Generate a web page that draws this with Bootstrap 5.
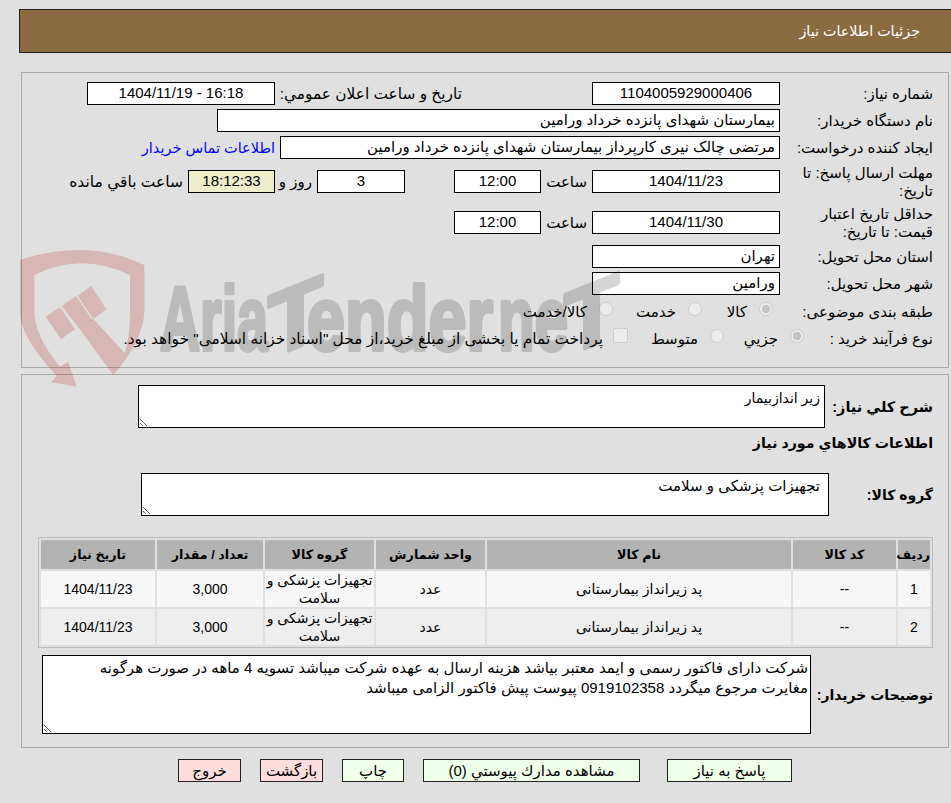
<!DOCTYPE html>
<html lang="fa" dir="rtl">
<head>
<meta charset="utf-8">
<title>جزئیات اطلاعات نیاز</title>
<link href="https://cdn.jsdelivr.net/npm/bootstrap@5.3.0/dist/css/bootstrap.min.css" rel="stylesheet">
<style>
html,body{background:#e0e0e0;}
body{position:relative;font-family:"Liberation Sans","DejaVu Sans",sans-serif;font-size:15px;line-height:18px;color:#000;margin:0;height:803px;overflow:hidden;text-align:right;}
.topbar{margin:9px -1px 19px 0;margin-left:19px;height:44px;background:#8b6c42;border:1px solid #222;color:#fff;padding:0 31px;display:flex;align-items:center;font-size:14.3px;}
.pane{margin:0 2px 0 0;margin-left:21px;border:1px solid #aaa;padding:9px 15px 0 16px;}
.pane-a{height:296px;margin-bottom:6px;}
.pane-b{height:374px;padding-top:10px;}
.frow{display:flex;align-items:center;height:23px;margin-bottom:4px;}
.frow-tall{height:37px;}
.frow-opt1{margin-top:5px;}
.frow-opt2{margin-top:2px;}
.flabel{flex:none;width:153px;}
.flabel-s{width:122px;}
.box.form-control{flex:none;height:23px;border:1px solid #000;border-radius:0;background:#fff;color:#000;font-size:15px;line-height:20px;padding:0 4px;text-align:right;white-space:nowrap;overflow:hidden;}
.box.num{text-align:center;}
.box.clock{background:#eeeecc;}
.w188{width:188px;}.w563{width:563px;}.w500{width:500px;}.w87{width:87px;}.w88{width:88px;}
.hint{flex:none;white-space:nowrap;font-size:15.4px;}
.slot{flex:none;white-space:nowrap;padding-right:5px;}
.slot-wide{font-size:15.5px;}
.s51{width:51px}.s42{width:42px}.s187{width:187px}
.gap130{margin-right:130px}.gap49{margin-right:49px}
.contact{color:#0000ff;text-decoration:none;font-size:14.5px;}
.opt{flex:none;display:flex;align-items:center;white-space:nowrap;padding-right:7px;}
.opt-long{font-size:15.4px;}
.o71{width:71px}.o89{width:89px}.o80{width:80px}.o96{width:96px}
.opt .form-check-input{flex:none;width:14px;height:14px;margin:-5px 0 0 12px;background-color:#ececec;border:1px solid #ccc;opacity:1;}
.opt .form-check-input:checked{background-color:#ececec;border-color:#ccc;background-image:radial-gradient(circle,#c4c4c4 0,#c4c4c4 4px,transparent 4.5px);}
.opt .form-check-input[type=checkbox]{width:15px;height:15px;margin:-6px 0 0 10px;border-radius:2px;}
.area.form-control{flex:none;display:block;border:1px solid #000;border-radius:0;background:#fff;color:#000;font-size:14px;line-height:20px;padding:2px 4px;min-height:0;resize:both;box-shadow:none;}
.area.area-15{font-size:15px;padding:2px 2px;}
.area.area-group{font-size:15px;padding:2px 8px;}
.ta1{width:687px;height:43px}.ta2{width:688px;height:43px}.ta3{width:769px;height:79px}
.strong-lab{font-weight:700;font-size:14.5px;flex:none;white-space:nowrap;}
.strong-14{font-size:14px;}
.l108{width:108px}.l104{width:104px}.l122{width:122px}
.heading-line{font-weight:700;font-size:14.2px;height:45px;padding-bottom:15px;display:flex;align-items:center;}
.goods.table{width:895px;margin:21px 0 7px;border-collapse:separate;border-spacing:2px;border:1px solid #bbb;table-layout:fixed;color:#000;}
.goods.table>:not(caption)>*>*{padding:0;border:0;text-align:center;vertical-align:middle;font-size:14px;line-height:18px;box-shadow:none;color:#000;}
.goods.table>thead>tr>th{background:#b3b3b3;height:29px;font-size:12.7px;font-weight:700;}
.goods.table>tbody>tr>td{height:36px;background:#f7f7f7;}
.goods.table>tbody>tr+tr>td{background:#eeeeee;}
.c32{width:32px}.c103{width:103px}.c304{width:304px}.c109{width:109px}.c106{width:106px}.c114{width:114px}
.actions{display:flex;margin:11px 0 0 0;padding-right:159px;gap:19px;}
.actions .btn{flex:none;height:23px;padding:0;border:1px solid #222;border-radius:0;color:#000;font-size:15px;line-height:20px;}
.go{background:#efffea;}.stop{background:#ffdddd;}
.first-go{margin-left:8px;}
.w125{width:125px}.w217{width:217px}.w62{width:62px}.w63{width:63px}
.stamp{position:absolute;left:0;top:0;width:951px;height:803px;pointer-events:none;direction:ltr;}
.stamp-word{opacity:.16;}
.stamp text{font-family:"Liberation Sans",sans-serif;font-weight:700;fill:#000;stroke:#000;stroke-width:4;stroke-linejoin:round;font-size:90px;}
</style>
</head>
<body>
<div class="topbar">جزئیات اطلاعات نیاز</div>

<section class="pane pane-a">
  <div class="frow">
    <div class="flabel">شماره نیاز:</div>
    <div class="box form-control num w188">1104005929000406</div>
    <div class="hint s187 gap130">تاریخ و ساعت اعلان عمومي:</div>
    <div class="box form-control num w188" dir="ltr">1404/11/19 - 16:18</div>
  </div>
  <div class="frow">
    <div class="flabel">نام دستگاه خریدار:</div>
    <div class="box form-control w563">بیمارستان شهدای پانزده خرداد ورامین</div>
  </div>
  <div class="frow">
    <div class="flabel">ایجاد کننده درخواست:</div>
    <div class="box form-control w500">مرتضی چالک نیری کارپرداز بیمارستان شهدای پانزده خرداد ورامین</div>
    <a class="contact slot" href="#">اطلاعات تماس خریدار</a>
  </div>
  <div class="frow frow-tall">
    <div class="flabel">مهلت ارسال پاسخ: تا تاریخ:</div>
    <div class="box form-control num w188">1404/11/23</div>
    <div class="slot s51">ساعت</div>
    <div class="box form-control num w87">12:00</div>
    <div class="box form-control num w88 gap49">3</div>
    <div class="slot s42">روز و</div>
    <div class="box form-control num clock w87">18:12:33</div>
    <div class="slot slot-wide">ساعت باقي مانده</div>
  </div>
  <div class="frow frow-tall">
    <div class="flabel">حداقل تاریخ اعتبار قیمت: تا تاریخ:</div>
    <div class="box form-control num w188">1404/11/30</div>
    <div class="slot s51">ساعت</div>
    <div class="box form-control num w87">12:00</div>
  </div>
  <div class="frow">
    <div class="flabel">استان محل تحویل:</div>
    <div class="box form-control w188">تهران</div>
  </div>
  <div class="frow">
    <div class="flabel">شهر محل تحویل:</div>
    <div class="box form-control w188">ورامین</div>
  </div>
  <div class="frow frow-opt1">
    <div class="flabel">طبقه بندی موضوعی:</div>
    <label class="opt o71"><input class="form-check-input" type="radio" name="c1" checked disabled>کالا</label>
    <label class="opt o89"><input class="form-check-input" type="radio" name="c1" disabled>خدمت</label>
    <label class="opt"><input class="form-check-input" type="radio" name="c1" disabled>کالا/خدمت</label>
  </div>
  <div class="frow frow-opt2">
    <div class="flabel flabel-s">نوع فرآیند خرید :</div>
    <label class="opt o80"><input class="form-check-input" type="radio" name="c2" checked disabled>جزیي</label>
    <label class="opt o96"><input class="form-check-input" type="radio" name="c2" disabled>متوسط</label>
    <label class="opt opt-long"><input class="form-check-input" type="checkbox" disabled>پرداخت تمام یا بخشی از مبلغ خرید،از محل "اسناد خزانه اسلامی" خواهد بود.</label>
  </div>
</section>

<section class="pane pane-b">
  <div class="d-flex align-items-center">
    <div class="strong-lab l108">شرح کلي نیاز:</div>
    <textarea class="area form-control ta1" readonly>زیر اندازبیمار</textarea>
  </div>
  <div class="heading-line">اطلاعات کالاهاي مورد نیاز</div>
  <div class="d-flex align-items-center">
    <div class="strong-lab strong-14 l104">گروه کالا:</div>
    <textarea class="area area-group form-control ta2" readonly>تجهیزات پزشکی و سلامت</textarea>
  </div>
  <table class="table goods">
    <colgroup><col class="c32"><col class="c103"><col class="c304"><col class="c109"><col class="c109"><col class="c106"><col class="c114"></colgroup>
    <thead>
      <tr><th>ردیف</th><th>کد کالا</th><th>نام کالا</th><th>واحد شمارش</th><th>گروه کالا</th><th>تعداد / مقدار</th><th>تاریخ نیاز</th></tr>
    </thead>
    <tbody>
      <tr><td>1</td><td>--</td><td>پد زیرانداز بیمارستانی</td><td>عدد</td><td>تجهیزات پزشکی و<br>سلامت</td><td>3,000</td><td>1404/11/23</td></tr>
      <tr><td>2</td><td>--</td><td>پد زیرانداز بیمارستانی</td><td>عدد</td><td>تجهیزات پزشکی و<br>سلامت</td><td>3,000</td><td>1404/11/23</td></tr>
    </tbody>
  </table>
  <div class="d-flex align-items-center">
    <div class="strong-lab strong-14 l122">توضیحات خریدار:</div>
    <textarea class="area area-15 form-control ta3" readonly>شرکت دارای فاکتور رسمی و ایمد معتبر بیاشد هزینه ارسال به عهده شرکت میباشد تسویه 4 ماهه در صورت هرگونه
مغایرت مرجوع میگردد 0919102358 پیوست پیش فاکتور الزامی میباشد</textarea>
  </div>
</section>

<div class="actions">
  <button type="button" class="btn go w125 first-go">پاسخ به نیاز</button>
  <button type="button" class="btn go w217">مشاهده مدارك پیوستي (0)</button>
  <button type="button" class="btn go w62">چاپ</button>
  <button type="button" class="btn stop w63">بازگشت</button>
  <button type="button" class="btn stop w63">خروج</button>
</div>

<svg class="stamp" viewBox="0 0 951 803" aria-hidden="true">
  <g transform="translate(15 240) scale(.3333)">
    <path fill="rgba(175,0,0,.19)" d="M15,60 Q110,28 200,30 Q290,30 388,75 L388,215 Q385,300 295,405 L190,262 L235,237 L330,340 Q345,285 345,215 L345,105 Q270,70 200,70 Q130,70 58,105 L58,215 Q60,290 135,380 L160,365 L185,440 L108,426 L125,408 Q15,290 15,215 Z"/>
    <path fill="rgba(175,0,0,.19)" d="M228,138 L275,208 L235,237 L188,167 Z M183,168 L232,240 L190,262 L140,198 Z M135,202 L180,268 L138,298 L92,230 Z"/>
  </g>
  <g class="stamp-word">
    <text x="160" y="350" textLength="108" lengthAdjust="spacingAndGlyphs">Aria</text>
    <text transform="translate(268 350) skewY(-22)" y="9">T</text>
    <text x="307" y="350" textLength="186" lengthAdjust="spacingAndGlyphs">ender</text>
    <text x="498" y="350" textLength="70" lengthAdjust="spacingAndGlyphs">ne</text>
    <text transform="translate(564 350) skewY(-22)" y="7">T</text>
  </g>
</svg>
<script src="https://cdn.jsdelivr.net/npm/bootstrap@5.3.0/dist/js/bootstrap.bundle.min.js"></script>
</body>
</html>
